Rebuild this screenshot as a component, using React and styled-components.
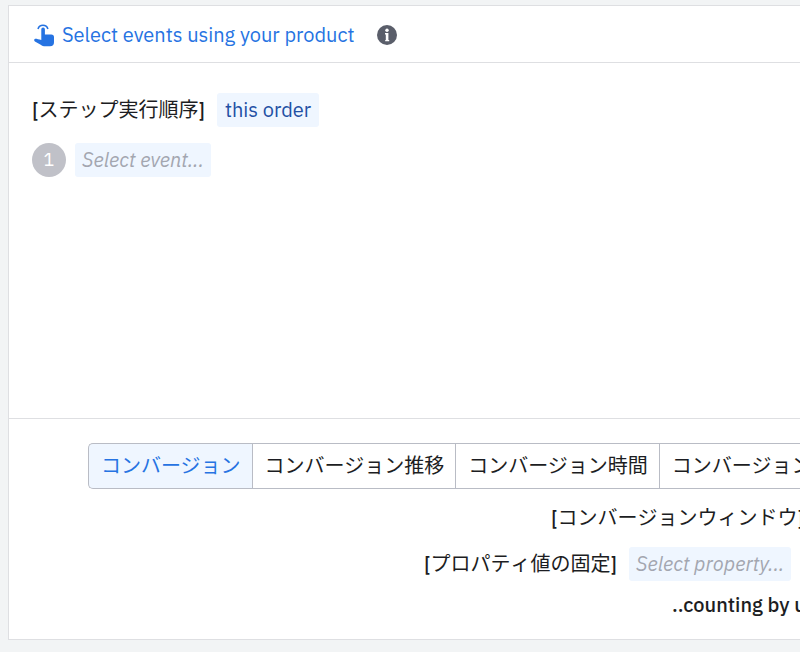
import styled, { createGlobalStyle } from 'styled-components'

const GlobalStyle = createGlobalStyle`
  * {
    box-sizing: border-box;
  }

  body {
    margin: 0;
    background: #f2f4f5;
    color: #1c1d22;
    font-family: 'IBM Plex Sans', Roboto, 'Noto Sans CJK JP', sans-serif;
    font-size: 20px;
    line-height: 34px;
    overflow-x: hidden;
  }

  button {
    margin: 0;
    border: 0;
    background: none;
    color: inherit;
    font: inherit;
    white-space: nowrap;
    cursor: pointer;
  }
`

const Page = styled.main`
  min-height: 100vh;
  padding: 5px 0 12px 8px;
  overflow: hidden;
`

const Panel = styled.section`
  background: #ffffff;
  border: 1px solid #dedfe2;
  border-right: 0;
`

const Header = styled.header`
  display: flex;
  align-items: center;
  gap: 22px;
  height: 57px;
  padding: 0 25px;
  border-bottom: 1px solid #dedfe2;
`

const PickerButton = styled.button`
  display: flex;
  align-items: center;
  gap: 6px;
  padding: 2px 0 0;
  color: #2673e2;
`

const InfoButton = styled.button`
  display: flex;
  padding: 2px 0 0;
  color: #5a5e6a;
`

const Steps = styled.div`
  display: flex;
  flex-direction: column;
  gap: 16px;
  min-height: 356px;
  padding: 30px 23px;
  border-bottom: 1px solid #dedfe2;
`

const Row = styled.div`
  display: flex;
  align-items: center;
  gap: ${({ $gap }) => $gap || '12px'};
  white-space: nowrap;
`

const LabelText = styled.span`
  font-kerning: none;
`

const Bracket = styled.span`
  font-weight: 500;
`

const CountLabel = styled.span`
  font-weight: 500;
  line-height: 24px;
`

const StepNumber = styled.span`
  width: 34px;
  height: 34px;
  border-radius: 50%;
  background: #c0c1c8;
  color: #ffffff;
  font-size: 18px;
  text-align: center;
`

const Chip = styled.button`
  height: 34px;
  padding: ${({ $empty }) => ($empty ? '0 7px' : '0 8px')};
  border-radius: 3px;
  background: #eff6ff;
  color: ${({ $empty }) => ($empty ? '#a3a6b0' : '#2350a4')};
  font-style: ${({ $empty }) => ($empty ? 'italic' : 'normal')};
`

const Options = styled.div`
  padding: 24px 0 22px 79px;
`

const Segments = styled.div`
  display: flex;
`

const Segment = styled.button`
  flex: none;
  height: 46px;
  padding: 0 11px 0 12px;
  border: 1px solid #b9bcc5;
  border-right: 0;
  background: ${({ $active }) => ($active ? '#eff6ff' : '#ffffff')};
  color: ${({ $active }) => ($active ? '#2673e2' : 'inherit')};

  &:first-child {
    border-radius: 5px 0 0 5px;
  }
`

const Settings = styled.div`
  display: flex;
  flex-direction: column;
  gap: 12px;
  padding-top: 12px;
`

const Setting = styled(Row)`
  padding-left: ${({ $indent }) => $indent};
`

const segments = ['コンバージョン', 'コンバージョン推移', 'コンバージョン時間', 'コンバージョン頻度']

function Label({ children }) {
  return (
    <LabelText>
      <Bracket>[</Bracket>
      {children}
      <Bracket>]</Bracket>
    </LabelText>
  )
}

function TouchIcon() {
  return (
    <svg width="22" height="24" viewBox="0 0 22 24" fill="#2673e2" aria-hidden="true">
      <path
        d="M4 5.9a5.2 5.2 0 0 1 9.9 0"
        fill="none"
        stroke="#2673e2"
        strokeWidth="1.6"
      />
      <path d="M7.3 6.3a1.8 1.8 0 0 1 3.6 0v5.2h6.4a2.7 2.7 0 0 1 2.7 2.7v5a4 4 0 0 1-4 4h-6c-1.4 0-2.4-.5-3.3-1.4L.9 18.4c-1.4-1.1-.7-2.7.8-2.7 1 0 3.2.7 5.6 1.3z" />
    </svg>
  )
}

function InfoIcon() {
  return (
    <svg width="22" height="22" viewBox="0 0 22 22" aria-hidden="true">
      <circle cx="11" cy="11" r="10" fill="currentColor" />
      <circle cx="11" cy="6.2" r="1.7" fill="#ffffff" />
      <path d="M9 9h3.4v7h.8v1.2H9.2V16h.6v-5.6H9z" fill="#ffffff" />
    </svg>
  )
}

function App() {
  return (
    <>
      <GlobalStyle />
      <Page>
        <Panel>
          <Header>
            <PickerButton type="button">
              <TouchIcon />
              Select events using your product
            </PickerButton>
            <InfoButton type="button" aria-label="Info">
              <InfoIcon />
            </InfoButton>
          </Header>

          <Steps>
            <Row>
              <Label>ステップ実行順序</Label>
              <Chip type="button">this order</Chip>
            </Row>
            <Row $gap="9px">
              <StepNumber>1</StepNumber>
              <Chip type="button" $empty>Select event...</Chip>
            </Row>
          </Steps>

          <Options>
            <Segments>
              {segments.map((name, i) => (
                <Segment key={name} type="button" $active={i === 0} aria-pressed={i === 0}>
                  {name}
                </Segment>
              ))}
            </Segments>
            <Settings>
              <Setting $indent="463px">
                <Label>コンバージョンウィンドウ</Label>
              </Setting>
              <Setting $indent="336px">
                <Label>プロパティ値の固定</Label>
                <Chip type="button" $empty>Select property...</Chip>
              </Setting>
              <Setting $indent="584px">
                <CountLabel>..counting by unique</CountLabel>
              </Setting>
            </Settings>
          </Options>
        </Panel>
      </Page>
    </>
  )
}

export default App
